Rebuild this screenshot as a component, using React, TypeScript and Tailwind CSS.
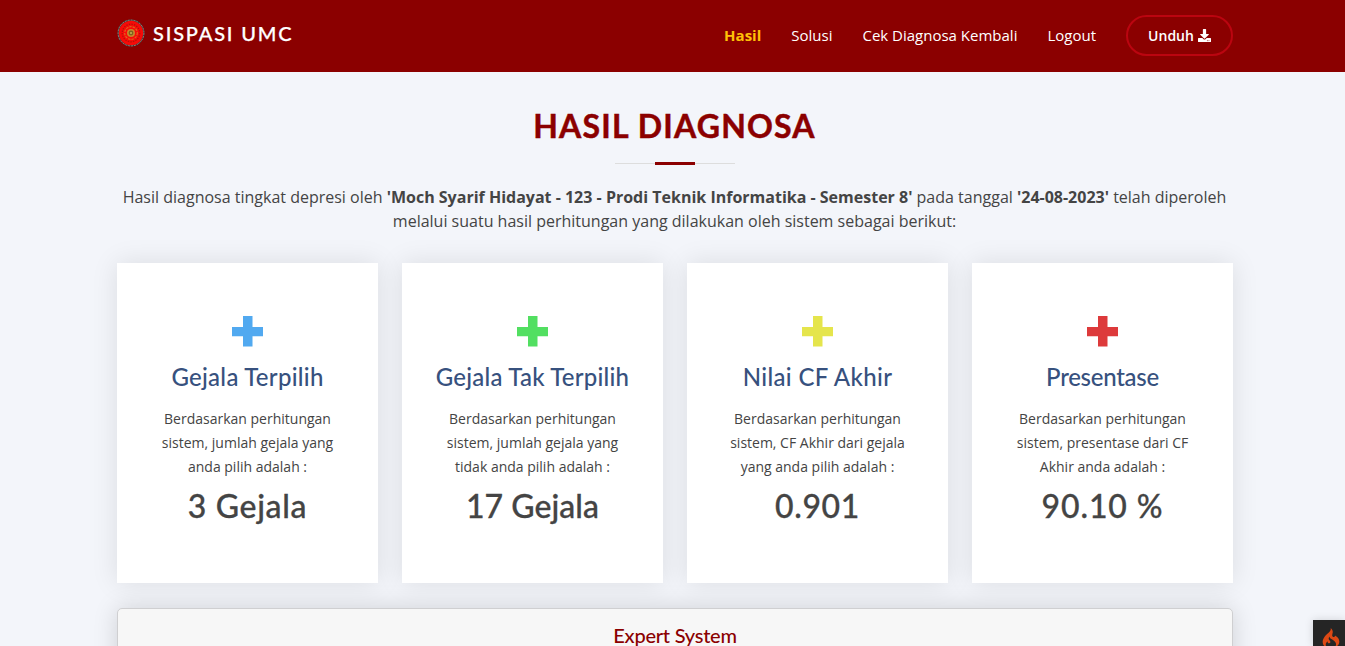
import { FaDownload } from "react-icons/fa";
import { SiCodeigniter } from "react-icons/si";

const cards = [
  {
    color: "#51a9f0",
    title: "Gejala Terpilih",
    titleClass: "tracking-[0.27px]",
    lines: ["Berdasarkan perhitungan", "sistem, jumlah gejala yang", "anda pilih adalah :"],
    value: "3 Gejala",
    valueClass: "tracking-[0.65px]",
  },
  {
    color: "#52df61",
    title: "Gejala Tak Terpilih",
    titleClass: "tracking-[0.22px]",
    lines: ["Berdasarkan perhitungan", "sistem, jumlah gejala yang", "tidak anda pilih adalah :"],
    value: "17 Gejala",
    valueClass: "tracking-[0.03px]",
  },
  {
    color: "#e5e54c",
    title: "Nilai CF Akhir",
    titleClass: "tracking-[0.36px]",
    lines: ["Berdasarkan perhitungan", "sistem, CF Akhir dari gejala", "yang anda pilih adalah :"],
    value: "0.901",
    valueClass: "tracking-[0.65px]",
  },
  {
    color: "#dd3a3b",
    title: "Presentase",
    titleClass: "tracking-[-0.28px]",
    lines: ["Berdasarkan perhitungan", "sistem, presentase dari CF", "Akhir anda adalah :"],
    value: "90.10 %",
    valueClass: "tracking-[0.9px]",
  },
];

function Emblem() {
  return (
    <svg className="h-7 w-7 shrink-0" viewBox="0 0 28 28">
      <circle cx="14" cy="14" r="13.5" fill="#3c3a38" />
      <circle cx="14" cy="14" r="12.9" fill="none" stroke="#a8a49e" strokeWidth="0.7" strokeDasharray="2 1" />
      <circle cx="14" cy="14" r="12.2" fill="#f80a08" />
      <circle cx="14" cy="14" r="8.8" fill="none" stroke="#b01408" strokeWidth="1.3" strokeDasharray="1.4 1.2" />
      <circle cx="14" cy="14" r="6.3" fill="none" stroke="#e0641a" strokeWidth="1.2" strokeDasharray="2.4 1" />
      <circle cx="14" cy="14" r="4" fill="#c8862a" />
      <circle cx="14" cy="14" r="2.4" fill="#7a6420" />
      <circle cx="14" cy="14" r="1" fill="#c8b050" />
    </svg>
  );
}

export default function App() {
  return (
    <div className="h-[646px] overflow-hidden bg-[#f3f5fa] font-['Open_Sans',sans-serif] text-[#444444]">
      <header className="h-[72px] bg-[#8b0000]">
        <div className="ml-[117px] flex h-full w-[1116px] items-center justify-between">
          <a className="flex items-center gap-2 pb-[6px] font-['Lato',sans-serif] text-[20px] leading-7 font-medium tracking-[1.8px] text-white [-webkit-text-stroke:0.25px]">
            <Emblem />
            <span className="whitespace-nowrap">SISPASI UMC</span>
          </a>
          <nav className="flex items-center gap-[30px] pb-[2px] text-[15px] whitespace-nowrap text-white">
            <a className="font-bold text-[#ffc107]">Hasil</a>
            <a>Solusi</a>
            <a>Cek Diagnosa Kembali</a>
            <a>Logout</a>
            <a className="flex h-[41px] w-[107px] items-center justify-center gap-1 rounded-full border-2 border-[#bb0510] text-[14px] font-semibold">
              Unduh <FaDownload className="h-[13px] w-[13px]" />
            </a>
          </nav>
        </div>
      </header>

      <main className="ml-[117px] w-[1115px]">
        <div className="flex flex-col items-center pt-[34px]">
          <h2 className="font-['Lato',sans-serif] text-[32px] leading-10 font-bold tracking-[1.2px] whitespace-nowrap text-[#8b0000] [-webkit-text-stroke:0.5px]">
            HASIL DIAGNOSA
          </h2>
          <div className="mt-4 flex h-[3px] w-[120px] items-center justify-center">
            <span className="h-px w-10 bg-[#dddddd]" />
            <span className="h-[3px] w-10 bg-[#8b0000]" />
            <span className="h-px w-10 bg-[#dddddd]" />
          </div>
          <p className="mt-5 text-center text-[16px] leading-6 whitespace-nowrap">
            Hasil diagnosa tingkat depresi oleh <b>'Moch Syarif Hidayat - 123 - Prodi Teknik Informatika - Semester 8'</b> pada
            tanggal <b>'24-08-2023'</b> telah diperoleh
            <br />
            melalui suatu hasil perhitungan yang dilakukan oleh sistem sebagai berikut:
          </p>
        </div>

        <section className="mt-[30px] grid w-[1116px] grid-cols-4 gap-6">
          {cards.map((c) => (
            <article
              key={c.title}
              className="flex h-[320px] flex-col items-center bg-white pt-[53px] shadow-[0_0_25px_0_rgba(0,0,0,0.1)]"
            >
              <svg className="h-[31px] w-[31px]" viewBox="0 0 31 31" fill={c.color}>
                <path d="M11 0h9.5v11H31v9.3H20.5v10.2H11V20.3H0V11h11z" />
              </svg>
              <h4
                className={`mt-[15px] font-['Lato',sans-serif] text-[24px] leading-[29px] font-medium whitespace-nowrap text-[#37517e] ${c.titleClass}`}
              >
                {c.title}
              </h4>
              <p className="mt-4 text-center text-[14px] leading-6 whitespace-nowrap">
                {c.lines.map((l) => (
                  <span key={l} className="block">
                    {l}
                  </span>
                ))}
              </p>
              <div
                className={`mt-2 font-['Lato',sans-serif] text-[32px] leading-[38px] font-medium whitespace-nowrap [-webkit-text-stroke:0.3px] ${c.valueClass}`}
              >
                {c.value}
              </div>
            </article>
          ))}
        </section>

        <section className="mt-[25px] h-40 w-[1116px] rounded-[5px] border border-[#cfcfd1] bg-[#f7f7f7] pt-[15px] text-center shadow-[0_0_25px_0_rgba(0,0,0,0.15)]">
          <h5 className="font-['Lato',sans-serif] text-[20px] leading-[22px] font-medium tracking-[-0.25px] text-[#8b0000]">
            Expert System
          </h5>
        </section>
      </main>

      <div className="fixed right-0 bottom-0 flex h-[26px] w-8 justify-center overflow-hidden bg-[#252525] pt-2 pl-[3px] shadow-[0_0_8px_rgba(0,0,0,0.15)]">
        <SiCodeigniter className="h-5 w-5 shrink-0 text-[#dd4814]" />
      </div>
    </div>
  );
}
